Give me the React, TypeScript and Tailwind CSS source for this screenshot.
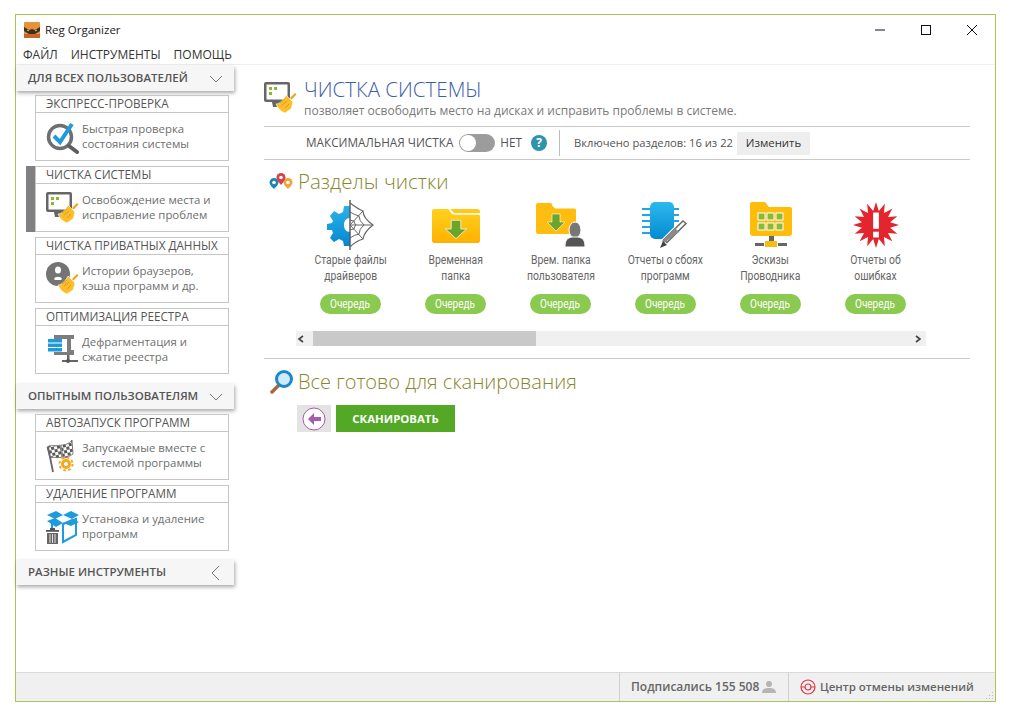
import React from "react";

const Broom = ({ x = 0, y = 0 }: { x?: number; y?: number }) => (
  <g transform={`translate(${x} ${y})`}>
    <path d="M14 7l5-5 1.500 1.500-5 5z" fill="#f0a31a" />
    <path d="M10 4l7 7c-1 3-1 5-2 7-3 2-5 3-6 4-3-1-7-4-9-9 3 0 7-3 10-9z" fill="#fbbd2a" stroke="#fff" strokeWidth="0.6" />
    <path d="M6 14l5-4M9 17l4-4M4 12l5-4" stroke="#e0920f" strokeWidth="0.8" fill="none" />
  </g>
);

const AppLogo = () => (
  <svg viewBox="0 0 16 16" className="w-4 h-4">
    <rect x="0" y="0" width="16" height="16" rx="1" fill="#e8913a" />
    <path d="M0 5l5 3 3-1 3 1 5-3v4l-5 3H5L0 9z" fill="#3c2f23" />
    <path d="M3 8l2 1M11 9l2-1" stroke="#a7c94a" strokeWidth="1.2" />
    <rect x="0" y="12" width="16" height="4" fill="#c9662a" />
  </svg>
);

const CheckIcon = () => (
  <svg viewBox="0 0 34 34" className="w-[34px] h-[34px]">
    <circle cx="14" cy="17" r="11.5" fill="none" stroke="#6f6f6f" strokeWidth="3.5" />
    <path d="M23 26l8 6" stroke="#5f5f5f" strokeWidth="4" strokeLinecap="round" />
    <path d="M8 16l6 6L26 4" fill="none" stroke="#1d9bdc" strokeWidth="4" />
  </svg>
);

const MonitorIcon = () => (
  <svg viewBox="0 0 34 34" className="w-[34px] h-[34px]">
    <rect x="0" y="1" width="26" height="20" rx="2" fill="#666" />
    <rect x="2.500" y="3.500" width="21" height="15" fill="#fff" />
    <rect x="5" y="6" width="3" height="3" fill="#8ab82f" />
    <rect x="10" y="6" width="3" height="3" fill="#8ab82f" />
    <rect x="5" y="11" width="3" height="3" fill="#8ab82f" />
    <path d="M8 21h10l3 5H9z" fill="#666" />
    <Broom x={12} y={10} />
  </svg>
);

const PrivateIcon = () => (
  <svg viewBox="0 0 34 34" className="w-[34px] h-[34px]">
    <circle cx="12" cy="12" r="12" fill="#747474" />
    <ellipse cx="12" cy="8" rx="3" ry="3.500" fill="#fff" />
    <path d="M8 17c1-3 7-3 8 0l-1 1H9z" fill="#fff" />
    <Broom x={12} y={10} />
  </svg>
);

const DefragIcon = () => (
  <svg viewBox="0 0 34 34" className="w-[34px] h-[34px]">
    <path d="M8 2h20v4h-3v11h3v5H8v-3h13V6H8z" fill="#7d7d7d" />
    <rect x="2" y="6" width="14" height="3.500" fill="#1d9bdc" />
    <rect x="2" y="10.500" width="14" height="3.500" fill="#1d9bdc" />
    <rect x="2" y="15" width="14" height="3.500" fill="#1d9bdc" />
    <rect x="21" y="22" width="2.500" height="5" fill="#666" />
    <rect x="16" y="27" width="16" height="2" fill="#666" />
    <circle cx="22" cy="28" r="2" fill="#555" />
  </svg>
);

const FlagsIcon = () => (
  <svg viewBox="0 0 34 34" className="w-[34px] h-[34px]">
    <defs>
      <pattern id="checker" width="6" height="6" patternUnits="userSpaceOnUse" patternTransform="rotate(-12)">
        <rect width="6" height="6" fill="#fff" />
        <rect width="3" height="3" fill="#5a5a5a" />
        <rect x="3" y="3" width="3" height="3" fill="#5a5a5a" />
      </pattern>
    </defs>
    <path d="M1 8c5-3 9 0 13-2l2 12c-4 2-8-1-12 1z" fill="url(#checker)" stroke="#666" strokeWidth="0.8" />
    <path d="M15 6c4 0 8-1 11-5l1 14c-3 2-6 4-10 4z" fill="url(#checker)" stroke="#666" strokeWidth="0.8" />
    <path d="M2 8l5 25" stroke="#666" strokeWidth="1.800" />
    <circle cx="20" cy="25" r="3.500" fill="none" stroke="#f4a81c" strokeWidth="3" />
    <circle cx="20" cy="25" r="6.500" fill="none" stroke="#f4a81c" strokeWidth="2" strokeDasharray="2.500 2.600" />
  </svg>
);

const BoxIcon = () => (
  <svg viewBox="0 0 34 34" className="w-[34px] h-[34px]">
    <path d="M17 14l13-5v16l-13 7z" fill="#fff" stroke="#1d9bdc" strokeWidth="2" />
    <path d="M6 11v9" stroke="#1d9bdc" strokeWidth="2" />
    <path d="M1 5l9-4 7 4-8 4zM17 5l8-4 8 4-7 4zM1 11l8-3 8 5-7 4zM17 13l9-4 7 3-8 4z" fill="#1d9bdc" />
    <rect x="0" y="20" width="13" height="1.800" fill="#555" />
    <rect x="4" y="18" width="5" height="2" fill="#555" />
    <path d="M1 23h11v11H1z" fill="#666" />
    <path d="M4 24v9M6.500 24v9M9 24v9" stroke="#fff" strokeWidth="0.8" />
  </svg>
);

const WebIcon = () => (
  <svg viewBox="0 0 47 50" className="w-[47px] h-[50px]">
    <defs>
      <linearGradient id="blue" x1="0" y1="0" x2="0" y2="1">
        <stop offset="0" stopColor="#2bb3ea" />
        <stop offset="1" stopColor="#0687cf" />
      </linearGradient>
    </defs>
    <path d="M23 6h-6l-1 6-4 2-5-3-4 5 3 5-1 2-5 1v6h5l1 3-3 5 4 4 5-3 4 2 1 5h6V32c-4 0-6-3-6-7s2-7 6-7z" fill="url(#blue)" />
    <path d="M23 0v50" stroke="#555" strokeWidth="1.400" />
    <path d="M23 3Q31 9 36 11Q36 18 46 25Q37 32 36 39Q29 41 23 47" fill="none" stroke="#666" strokeWidth="1.200" />
    <path d="M23 12Q28 15 32 16Q32 21 37 25Q32 29 32 34Q27 35 23 38M23 20Q25 21 27 21Q27 23 29 25Q27 27 27 29Q25 29 23 30" fill="none" stroke="#666" strokeWidth="1" />
    <path d="M23 25H46M23 25L36 11M23 25L36 39" stroke="#666" strokeWidth="1" />
  </svg>
);

const Folder = ({ children }: { children?: React.ReactNode }) => (
  <svg viewBox="0 0 50 40" className="w-[48px] h-[35px]" preserveAspectRatio="none">
    <defs>
      <linearGradient id="gold" x1="0" y1="0" x2="0" y2="1">
        <stop offset="0" stopColor="#ffd21e" />
        <stop offset="1" stopColor="#ffb000" />
      </linearGradient>
    </defs>
    <path d="M2 1h15l4 6h27a2 2 0 0 1 2 2v28a3 3 0 0 1-3 3H3a3 3 0 0 1-3-3V3a2 2 0 0 1 2-2z" fill="url(#gold)" />
    <path d="M19 1h28a3 3 0 0 1 3 3v2H23z" fill="#ffc91a" />
    <path d="M20 3l3 4h27" fill="none" stroke="#fff" strokeWidth="1" />
    {children}
  </svg>
);

const Arrow = () => <path d="M20 14h10v10h6L25 35 14 24h6z" fill="#6da52c" stroke="#fff" strokeWidth="0.8" />;

const TempIcon = () => (
  <div className="h-[50px] flex items-center">
    <Folder>
      <Arrow />
    </Folder>
  </div>
);

const UserFolderIcon = () => (
  <svg viewBox="0 0 50 44" className="w-[50px] h-[44px]">
    <path d="M2 0h13l4 5h19a2 2 0 0 1 2 2v22a2 2 0 0 1-2 2H2a2 2 0 0 1-2-2V2a2 2 0 0 1 2-2z" fill="#ffbd0f" />
    <path d="M16 2l3 3h21" fill="none" stroke="#fff" strokeWidth="1" />
    <path d="M16 11h8v8h5l-9 9-9-9h5z" fill="#6da52c" stroke="#fff" strokeWidth="0.6" />
    <ellipse cx="39" cy="27" rx="6" ry="8" fill="#777" stroke="#fff" strokeWidth="1" />
    <path d="M29 44c0-7 2-9 7-10h6c5 1 7 3 7 10z" fill="#555" stroke="#fff" strokeWidth="1" />
  </svg>
);

const ChipIcon = () => (
  <svg viewBox="0 0 47 48" className="w-[47px] h-[48px]">
    <defs>
      <linearGradient id="chip" x1="0" y1="0" x2="0" y2="1">
        <stop offset="0" stopColor="#2bb9ee" />
        <stop offset="1" stopColor="#058ad1" />
      </linearGradient>
    </defs>
    <path d="M0 8h8M0 14h8M0 20h8M0 26h8M0 32h8M30 8h7M30 14h7M30 20h7" stroke="#21a5e4" strokeWidth="2" />
    <rect x="8" y="1" width="24" height="37" rx="5" fill="url(#chip)" />
    <path d="M41 17l6 5-21 21-10 5 4-10z" fill="#fff" />
    <path d="M41 20l3 2.500-19 19-3-3z" fill="none" stroke="#666" strokeWidth="1.500" />
    <path d="M33 27l4 4-15 11-2-2z" fill="#8a8a8a" />
    <path d="M18 47l3-7 4 4z" fill="#444" />
  </svg>
);

const ThumbsIcon = () => (
  <svg viewBox="0 0 42 46" className="w-[42px] h-[46px]">
    <path d="M2 0h13l4 5h21a2 2 0 0 1 2 2v24a3 3 0 0 1-3 3H3a3 3 0 0 1-3-3V2a2 2 0 0 1 2-2z" fill="#fdbd0c" />
    <path d="M16 1l4 3h20" fill="none" stroke="#fff" strokeWidth="1" />
    {[8, 17, 26].map((x) =>
      [11, 21].map((y) => <rect key={`${x}-${y}`} x={x} y={y} width="7" height="7" fill="#8cba34" stroke="#fff" strokeWidth="1" />)
    )}
    <rect x="19" y="34" width="5" height="5" fill="#666" />
    <rect x="15" y="39" width="12" height="6" fill="#f7bd12" />
    <rect x="5" y="41" width="9" height="3" fill="#666" />
    <rect x="28" y="41" width="9" height="3" fill="#666" />
  </svg>
);

const BurstIcon = () => {
  const pts: string[] = [];
  for (let i = 0; i < 32; i++) {
    const r = i % 2 === 0 ? 24 : 15;
    const a = (i / 32) * Math.PI * 2;
    pts.push(`${25 + r * Math.sin(a)},${25 - r * Math.cos(a)}`);
  }
  return (
    <svg viewBox="0 0 50 50" className="w-[48px] h-[48px]">
      <polygon points={pts.join(" ")} fill="#e3262e" />
      <rect x="22" y="12" width="6" height="17" fill="#fff" />
      <rect x="22" y="32" width="6" height="6" fill="#fff" />
    </svg>
  );
};

const PinsIcon = () => (
  <svg viewBox="0 0 24 17" className="w-6 h-[17px]">
    <path d="M5 5a4.5 4.5 0 0 1 4.5 4.5C9.500 12 5 16 5 16S.5 12 .5 9.500A4.500 4.500 0 0 1 5 5z" fill="#1d84b5" />
    <circle cx="5" cy="9.500" r="1.800" fill="#fff" />
    <path d="M19 5a4.500 4.500 0 0 1 4.500 4.500C23.500 12 19 16 19 16s-4.500-4-4.500-6.500A4.500 4.500 0 0 1 19 5z" fill="#f2a33a" />
    <circle cx="19" cy="9.500" r="1.800" fill="#fff" />
    <path d="M12 0a4.500 4.500 0 0 1 4.500 4.500C16.500 7 12 12 12 12S7.500 7 7.500 4.500A4.500 4.500 0 0 1 12 0z" fill="#d8404a" />
    <circle cx="12" cy="4.500" r="1.800" fill="#fff" />
  </svg>
);

const Chevron = ({ left }: { left?: boolean }) => (
  <svg viewBox="0 0 14 14" className="w-3.5 h-3.5">
    <path d={left ? "M10 0L3 7l7 7" : "M1 4l6 6 6-6"} fill="none" stroke="#777" strokeWidth="1" />
  </svg>
);

const Group = ({ title, left }: { title: string; left?: boolean }) => (
  <div className="h-[25px] w-[218px] shrink-0 flex items-center justify-between pl-3 pr-[11px] bg-[#f6f6f6] shadow-[1px_2px_4px_rgba(0,0,0,0.35)] text-[11.5px] font-semibold text-[#555] whitespace-nowrap">
    <span className="mb-[2px]">{title}</span>
    <Chevron left={left} />
  </div>
);

const Card = ({ title, lines, icon, active }: { title: string; lines: string[]; icon: React.ReactNode; active?: boolean }) => (
  <div className={active ? "flex ml-[10px]" : "flex ml-[19px]"}>
    {active && <div className="w-[9px] bg-[#808080]" />}
    <div className="w-[194px] h-[66px] border border-[#c6c6c6] flex flex-col">
      <div className="h-[17px] border-b border-[#c6c6c6] pl-[10px] text-[11.7px] leading-[14px] text-[#555] whitespace-nowrap">{title}</div>
      <div className="flex-1 flex items-center pl-[10px] gap-[2px]">
        <div className="w-[34px] h-[34px] shrink-0">{icon}</div>
        <div className="text-[11.4px] leading-[15px] text-[#6e6e6e] whitespace-nowrap mb-[2px]">
          {lines.map((l) => (
            <div key={l}>{l}</div>
          ))}
        </div>
      </div>
    </div>
  </div>
);

const sections: { lines: string[]; icon: React.ReactNode }[] = [
  { lines: ["Старые файлы", "драйверов"], icon: <WebIcon /> },
  { lines: ["Временная", "папка"], icon: <TempIcon /> },
  { lines: ["Врем. папка", "пользователя"], icon: <UserFolderIcon /> },
  { lines: ["Отчеты о сбоях", "программ"], icon: <ChipIcon /> },
  { lines: ["Эскизы", "Проводника"], icon: <ThumbsIcon /> },
  { lines: ["Отчеты об", "ошибках"], icon: <BurstIcon /> },
];

export default function App() {
  return (
    <div className="w-[1010px] h-[716px] bg-white pl-[15px] pt-[14px] overflow-hidden font-['Open_Sans','Noto_Sans',sans-serif]">
      <div className="w-[981px] h-[688px] border border-[#a9c457] flex flex-col bg-white">
        {/* title bar */}
        <div className="h-[30px] shrink-0 flex items-center pl-2 text-[11.5px] text-[#222]">
          <AppLogo />
          <span className="ml-[5px]">Reg Organizer</span>
          <div className="ml-auto flex items-center">
            <svg viewBox="0 0 12 12" className="w-3 h-3">
              <path d="M1 6h10" stroke="#111" strokeWidth="1" />
            </svg>
            <svg viewBox="0 0 12 12" className="w-3 h-3 ml-[34px]">
              <rect x="1.500" y="1.500" width="9" height="9" fill="none" stroke="#111" strokeWidth="1" />
            </svg>
            <svg viewBox="0 0 12 12" className="w-3 h-3 ml-[34px] mr-[17px]">
              <path d="M1 1l10 10M11 1L1 11" stroke="#111" strokeWidth="1" />
            </svg>
          </div>
        </div>
        {/* menu */}
        <div className="h-[20px] shrink-0 flex items-center pl-[7px] gap-[13px] text-[12px] text-[#333] border-b border-[#eeeeee]">
          <span>ФАЙЛ</span>
          <span>ИНСТРУМЕНТЫ</span>
          <span>ПОМОЩЬ</span>
        </div>
        <div className="flex-1 flex min-h-0">
          {/* sidebar */}
          <div className="w-[218px] shrink-0 flex flex-col pt-[1px]">
            <Group title="ДЛЯ ВСЕХ ПОЛЬЗОВАТЕЛЕЙ" />
            <div className="flex flex-col gap-[5px] mt-1">
              <Card title="ЭКСПРЕСС-ПРОВЕРКА" lines={["Быстрая проверка", "состояния системы"]} icon={<CheckIcon />} />
              <Card active title="ЧИСТКА СИСТЕМЫ" lines={["Освобождение места и", "исправление проблем"]} icon={<MonitorIcon />} />
              <Card title="ЧИСТКА ПРИВАТНЫХ ДАННЫХ" lines={["Истории браузеров,", "кэша программ и др."]} icon={<PrivateIcon />} />
              <Card title="ОПТИМИЗАЦИЯ РЕЕСТРА" lines={["Дефрагментация и", "сжатие реестра"]} icon={<DefragIcon />} />
            </div>
            <div className="mt-[10px]">
              <Group title="ОПЫТНЫМ ПОЛЬЗОВАТЕЛЯМ" />
            </div>
            <div className="flex flex-col gap-[5px] mt-[5px]">
              <Card title="АВТОЗАПУСК ПРОГРАММ" lines={["Запускаемые вместе с", "системой программы"]} icon={<FlagsIcon />} />
              <Card title="УДАЛЕНИЕ ПРОГРАММ" lines={["Установка и удаление", "программ"]} icon={<BoxIcon />} />
            </div>
            <div className="mt-[9px]">
              <Group title="РАЗНЫЕ ИНСТРУМЕНТЫ" left />
            </div>
          </div>
          {/* main */}
          <div className="w-[706px] ml-[30px] flex flex-col">
            <div className="h-[62px] shrink-0 border-b border-[#c9c9c9] flex pt-[13px]">
              <div className="w-[34px] h-[34px] shrink-0 mt-[3px]">
                <MonitorIcon />
              </div>
              <div className="ml-[6px]">
                <div className="text-[20.5px] leading-[23px] font-light text-[#3c5ea8] whitespace-nowrap">ЧИСТКА СИСТЕМЫ</div>
                <div className="mt-[2px] text-[12px] leading-[15px] text-[#7a7a7a] whitespace-nowrap">позволяет освободить место на дисках и исправить проблемы в системе.</div>
              </div>
            </div>
            <div className="h-[33px] shrink-0 border-b border-[#c9c9c9] flex items-center pl-[42px] text-[11.75px] text-[#555]">
              <span>МАКСИМАЛЬНАЯ ЧИСТКА</span>
              <div className="ml-[6px] w-[36px] h-[18px] rounded-full bg-[#9c9c9c] flex items-center pl-[1px]">
                <div className="w-[16px] h-[16px] rounded-full bg-white" />
              </div>
              <span className="ml-[5px]">НЕТ</span>
              <div className="ml-[9px] w-4 h-4 rounded-full bg-[#2f93ac] text-white text-[12px] font-bold flex items-center justify-center">?</div>
              <div className="ml-[12px] w-px h-[26px] bg-[#bdbdbd]" />
              <span className="ml-[14px] text-[11.2px]">Включено разделов: 16 из 22</span>
              <div className="ml-[4px] w-[73px] h-[23px] bg-[#eeeeee] flex items-center justify-center text-[11.4px] text-[#333]">Изменить</div>
            </div>
            <div className="mt-[9px] flex items-center pl-[5px] h-[24px]">
              <PinsIcon />
              <span className="ml-[5px] text-[20.5px] font-light text-[#87882c]">Разделы чистки</span>
            </div>
            <div className="mt-[7px] ml-[34px] w-[630px] flex">
              {sections.map((s) => (
                <div key={s.lines[0]} className="w-[105px] shrink-0 flex flex-col items-center font-['Roboto',sans-serif]">
                  <div className="h-[50px] flex items-center justify-center">{s.icon}</div>
                  <div className="mt-[2px] text-[12.5px] leading-[16px] scale-x-[0.83] text-[#666] text-center whitespace-nowrap">
                    {s.lines.map((l) => (
                      <div key={l}>{l}</div>
                    ))}
                  </div>
                  <div className="mt-[10px] w-[61px] h-[20px] rounded-full bg-[#8bca50] text-white flex items-center justify-center">
                    <span className="text-[12.5px] scale-x-[0.8]">Очередь</span>
                  </div>
                </div>
              ))}
            </div>
            <div className="mt-[17px] ml-[32px] w-[630px] h-[15px] bg-[#f0f0f0] flex items-center">
              <svg viewBox="0 0 8 8" className="w-2 h-2 ml-[1px]">
                <path d="M6 1L2 4l4 3" fill="none" stroke="#444" strokeWidth="1.600" />
              </svg>
              <div className="ml-[8px] w-[223px] h-full bg-[#c9c9c9]" />
              <svg viewBox="0 0 8 8" className="w-2 h-2 ml-auto mr-[4px]">
                <path d="M2 1l4 3-4 3" fill="none" stroke="#444" strokeWidth="1.600" />
              </svg>
            </div>
            <div className="mt-[12px] border-t border-[#c9c9c9] pt-[11px] flex items-center pl-[6px] h-[36px]">
              <svg viewBox="0 0 24 24" className="w-[24px] h-[24px]">
                <path d="M9 15L2 22" stroke="#a8683a" strokeWidth="3.500" strokeLinecap="round" />
                <circle cx="14" cy="9" r="7.500" fill="#cfeaf8" stroke="#1c88c9" strokeWidth="3" />
              </svg>
              <span className="ml-[4px] text-[20px] font-light text-[#87882c]">Все готово для сканирования</span>
            </div>
            <div className="mt-[11px] ml-[33px] flex gap-[5px]">
              <div className="w-[34px] h-[27px] bg-[#e3e3e3] flex items-center justify-center">
                <svg viewBox="0 0 24 24" className="w-[24px] h-[24px]">
                  <circle cx="12" cy="12" r="11" fill="#fff" stroke="#a75bb0" strokeWidth="1" />
                  <path d="M12 6l-6 6 6 6v-4h7v-4h-7z" fill="#a75bb0" />
                </svg>
              </div>
              <div className="w-[119px] h-[27px] bg-[#53a925] text-white text-[11.4px] font-bold flex items-center justify-center">СКАНИРОВАТЬ</div>
            </div>
          </div>
        </div>
        {/* status bar */}
        <div className="h-[29px] shrink-0 bg-[#f0f0f0] border-t border-[#d9d9d9] flex items-center justify-end text-[12px] font-semibold text-[#666]">
          <div className="h-full border-l border-[#d0d0d0] flex items-center pl-[11px] w-[169px]">
            <span>Подписались 155 508</span>
            <svg viewBox="0 0 14 14" className="w-3.5 h-3.5 ml-[3px]">
              <circle cx="7" cy="4" r="3" fill="#b5b5b5" />
              <path d="M0 13c0-4 3-5 7-5s7 1 7 5z" fill="#b5b5b5" />
            </svg>
          </div>
          <div className="h-full border-l border-[#d0d0d0] flex items-center pl-[11px] w-[207px] relative">
            <svg viewBox="0 0 16 16" className="w-4 h-4">
              <circle cx="8" cy="8" r="7" fill="none" stroke="#dc3a45" strokeWidth="1.200" />
              <circle cx="8" cy="8" r="3" fill="none" stroke="#dc3a45" strokeWidth="1.200" />
              <path d="M1 8h4M11 8h4" stroke="#dc3a45" strokeWidth="1.200" />
            </svg>
            <span className="ml-[4px] text-[11.5px]">Центр отмены изменений</span>
            <svg viewBox="0 0 9 9" className="w-[9px] h-[9px] absolute right-[1px] bottom-[1px]">
              <path d="M7 1h1v1H7zM4 4h1v1H4zM7 4h1v1H7zM1 7h1v1H1zM4 7h1v1H4zM7 7h1v1H7z" fill="#bdbdbd" />
            </svg>
          </div>
        </div>
      </div>
    </div>
  );
}
